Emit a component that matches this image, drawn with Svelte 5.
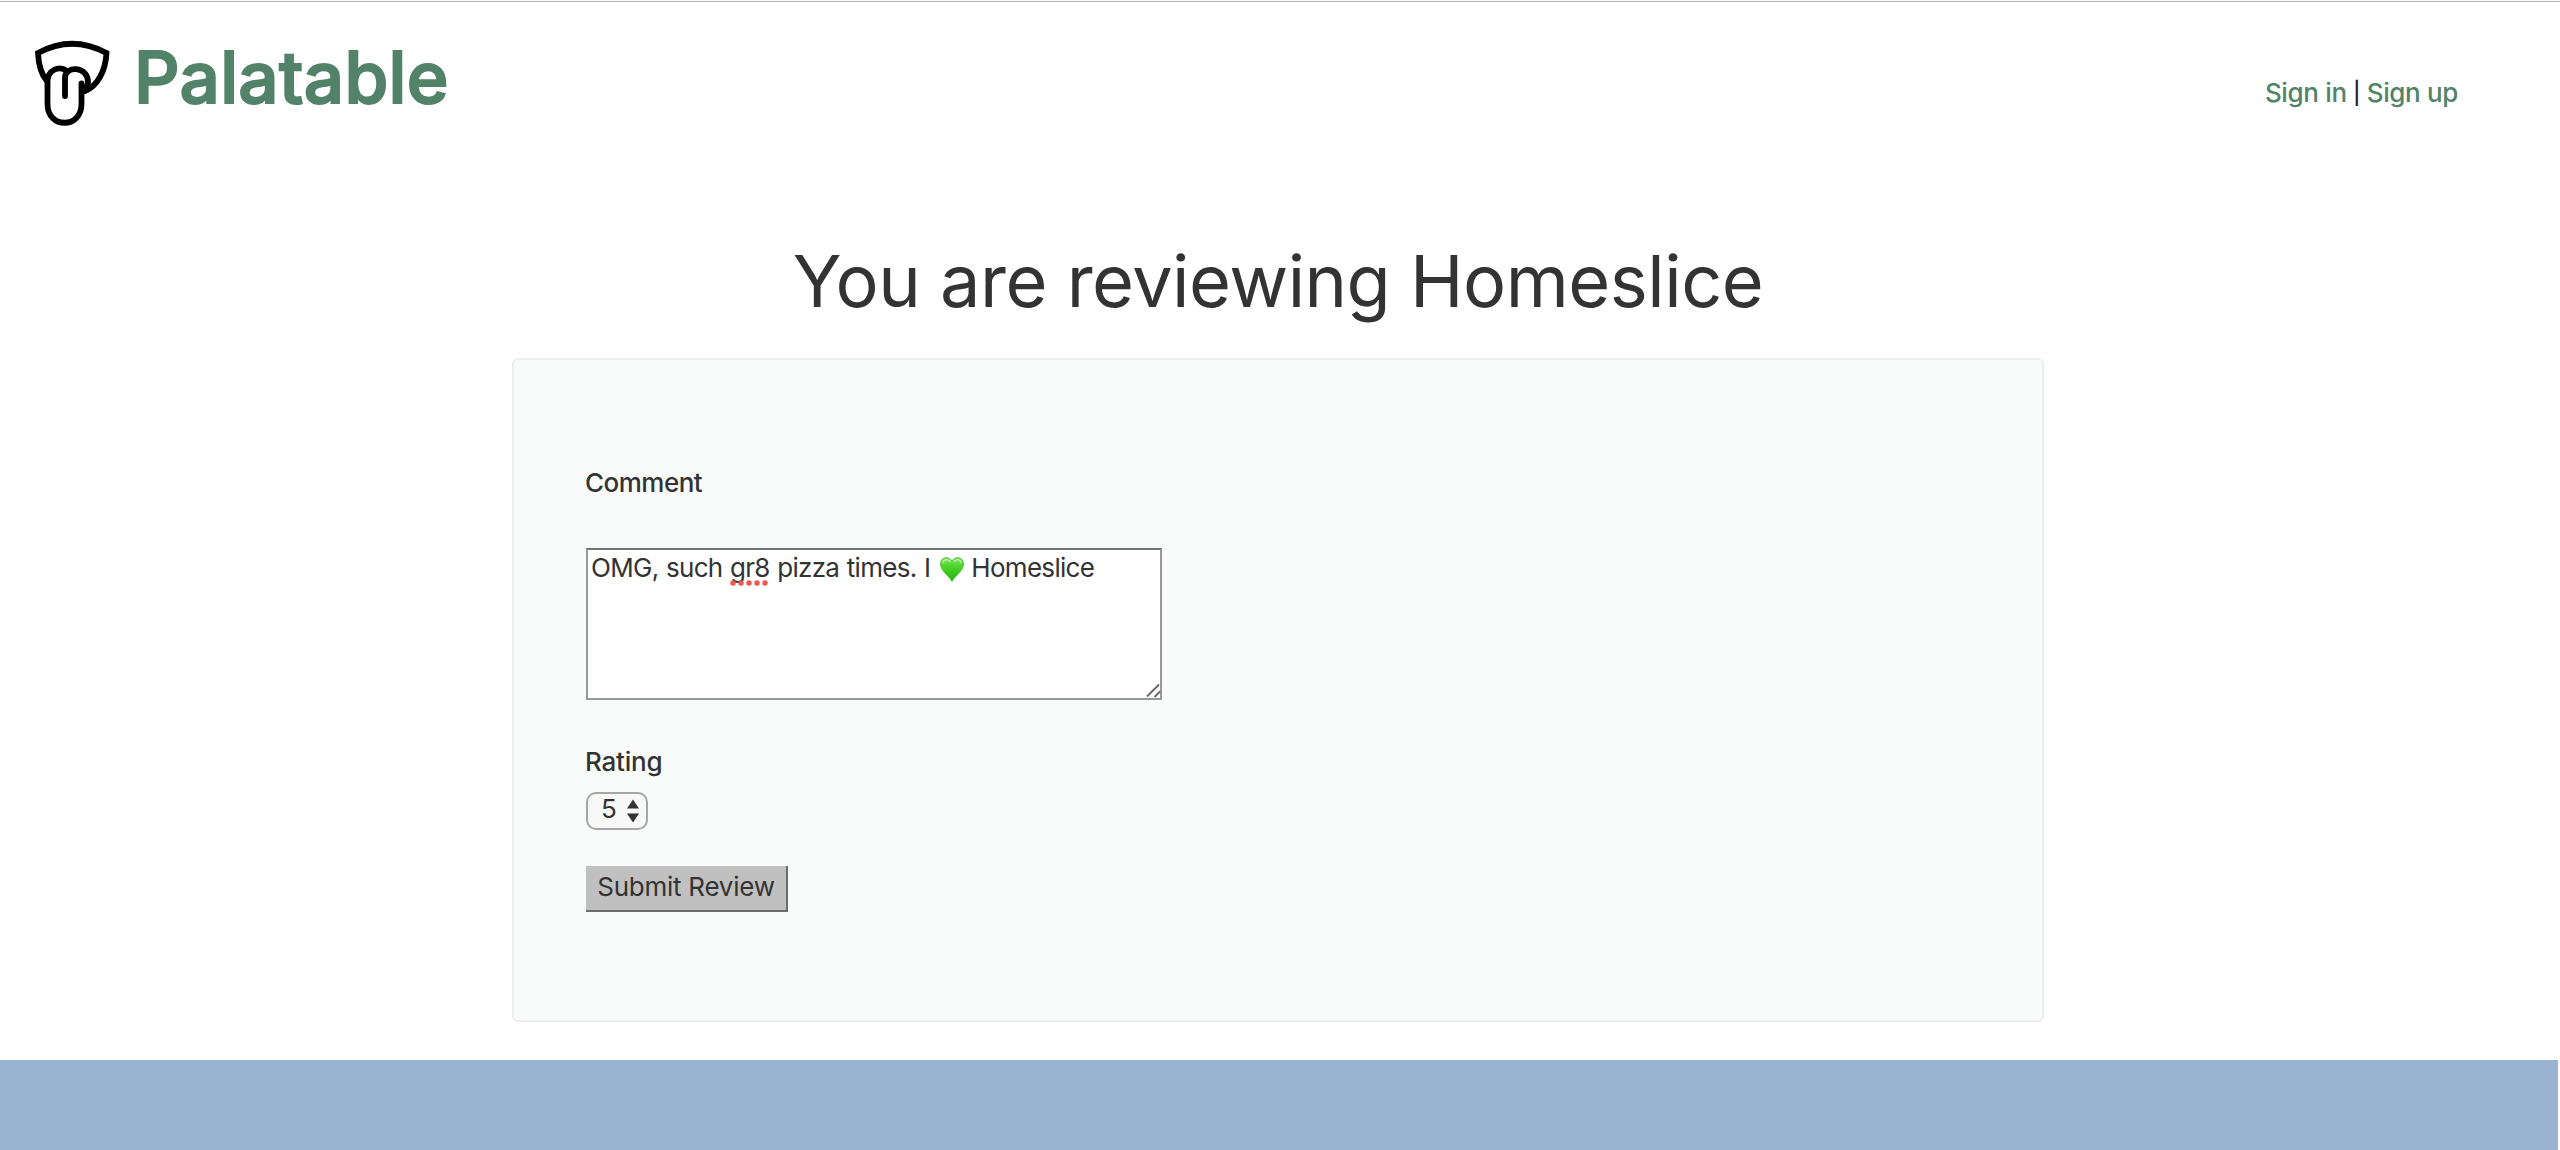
<script>
  const restaurant = 'Homeslice';
  const rating = 5;
</script>

<div class="page">
  <header>
    <a class="brand" href="#home">
      <svg class="logo" viewBox="0 0 90 95" width="90" height="95" aria-hidden="true">
        <path d="M16.5 44.500C10.500 37 8.500 28 8 17Q42 -1.500 76.500 17C75.500 36 67 50 55 55" />
        <path d="M35 60V42C35 29 58 30 58 46Q58 50 54 53.500" />
        <path d="M37 35C29 29 17.500 34 17.500 46V68C17.500 93 51.500 93 51.500 68V47.500" />
      </svg>
      <span class="name">Palatable</span>
    </a>
    <nav><a href="#in">Sign in</a><span class="bar">|</span><a href="#up">Sign up</a></nav>
  </header>

  <main>
    <h1>You are reviewing {restaurant}</h1>
    <form class="card">
      <div class="label">Comment</div>
      <div class="comment">
        <span>OMG,</span>
        <span>such</span>
        <span class="misspelt">gr8<svg class="dots" viewBox="0 0 40 6" width="40" height="6">
          {#each [3, 11, 19, 27, 35] as x}<circle cx={x} cy="3" r="2.700" />{/each}
        </svg></span>
        <span>pizza</span>
        <span>times.</span>
        <span>I</span>
        <svg class="heart" viewBox="0 0 24 25" width="24" height="25">
          <defs>
            <linearGradient id="leaf" x1="0" y1="0" x2="0" y2="1">
              <stop offset="0" stop-color="#8ae66c" />
              <stop offset=".35" stop-color="#4fd52c" />
              <stop offset="1" stop-color="#22b407" />
            </linearGradient>
          </defs>
          <path d="M12 24.500C9 18.500 .5 14 .5 7C.5 -.5 9.500 -1.500 12 4.500C14.500 -1.500 23.500 -.5 23.500 7C23.500 14 15 18.500 12 24.500Z" fill="url(#leaf)" stroke="#35b51d" stroke-width=".7" />
          <path d="M2.800 5.500C4 1.800 8 1.800 10 4.500M14.200 4.500C16 1.800 20 1.800 21.200 5.500" fill="none" stroke="#b5f29f" stroke-width="1.300" stroke-linecap="round" />
        </svg>
        <span>{restaurant}</span>
        <svg class="grip" viewBox="0 0 15 16" width="15" height="16"><path d="M1 14.500L13 2.500M8.500 15L14 9.500" /></svg>
      </div>
      <div class="label second">Rating</div>
      <div class="select">
        <span>{rating}</span>
        <svg viewBox="0 0 12 24" width="12" height="24"><path d="M0 9.500L6 .5L12 9.500ZM0 14.500L6 23.500L12 14.500Z" /></svg>
      </div>
      <button type="button">Submit Review</button>
    </form>
  </main>
  <footer></footer>
</div>

<style>
  :global(body) { margin: 0; background: #fff; }
  .page {
    box-sizing: border-box;
    height: 1150px;
    display: flex;
    flex-direction: column;
    border-top: 1px solid #fafafa;
    font-family: Inter, "Open Sans", sans-serif;
    font-size: 26px;
    font-weight: 430;
    line-height: 32px;
    color: #333;
    overflow: hidden;
  }
  header {
    box-sizing: border-box;
    height: 236px;
    border-top: 1px solid #b4b4b4;
    display: flex;
    justify-content: space-between;
    align-items: flex-start;
    padding: 31px 102px 0 30px;
  }
  a { color: #528368; text-decoration: none; }
  .brand { display: flex; align-items: flex-start; }
  .logo { margin-top: 3px; fill: none; stroke: #000; stroke-width: 5.800; stroke-linecap: round; stroke-linejoin: miter; }
  .name {
    margin-left: 14px;
    font-size: 71px;
    line-height: 88px;
    font-weight: 500;
    letter-spacing: 0.300px;
    -webkit-text-stroke: 2px #528368;
    stroke-linejoin: round;
  }
  nav { display: flex; margin-top: 44px; letter-spacing: -0.350px; font-weight: 450; }
  .bar { width: 20px; text-align: center; color: #222; font-size: 22px; }
  main {
    height: 823px;
    flex: none;
    display: flex;
    flex-direction: column;
    align-items: center;
    padding-right: 4px;
  }
  h1 {
    margin: 0;
    font-size: 72px;
    line-height: 88px;
    font-weight: 420;
    letter-spacing: -0.500px;
    white-space: nowrap;
  }
  .card {
    box-sizing: border-box;
    width: 1532px;
    height: 664px;
    margin-top: 33px;
    padding: 107px 72px 0;
    border: 2px solid #eee;
    border-radius: 6px;
    background: #f9fbfa;
    display: flex;
    flex-direction: column;
    align-items: flex-start;
  }
  .label { font-weight: 500; letter-spacing: -0.500px; margin-left: -1px; }
  .comment {
    box-sizing: border-box;
    position: relative;
    width: 576px;
    height: 152px;
    margin-top: 49px;
    padding: 2px 3px;
    border: 2px solid #999;
    border-top-color: #737373;
    background: #fff;
    display: flex;
    align-items: flex-start;
    gap: 7.500px;
    letter-spacing: -0.700px;
    white-space: nowrap;
  }
  .misspelt { position: relative; }
  .dots { position: absolute; left: 0; top: 28px; fill: #f0564c; }
  .heart { margin: 5px 0 0 2px; }
  .grip { position: absolute; right: -1px; bottom: 0; fill: none; stroke: #666; stroke-width: 1.800; }
  .second { margin-top: 46px; letter-spacing: -0.200px; }
  .select {
    box-sizing: border-box;
    width: 62px;
    height: 38px;
    margin-top: 14px;
    padding: 0 7px 0 13px;
    border: 2px solid #a6a6a6;
    border-radius: 10px;
    background: #f8f8f8;
    display: flex;
    align-items: center;
    justify-content: space-between;
  }
  .select span { margin-top: -4px; }
  .select svg { fill: #333; }
  button {
    box-sizing: border-box;
    width: 202px;
    height: 46px;
    margin: 36px 0 0;
    padding: 0 0 2px;
    border: 0 solid #6c6c6c;
    border-width: 0 2px 2px 0;
    background: #c0c0c0;
    color: #333;
    font: inherit;
    letter-spacing: -0.250px;
  }
  footer { flex: 1; margin-right: 2px; background: #9ab3d0; }
</style>
